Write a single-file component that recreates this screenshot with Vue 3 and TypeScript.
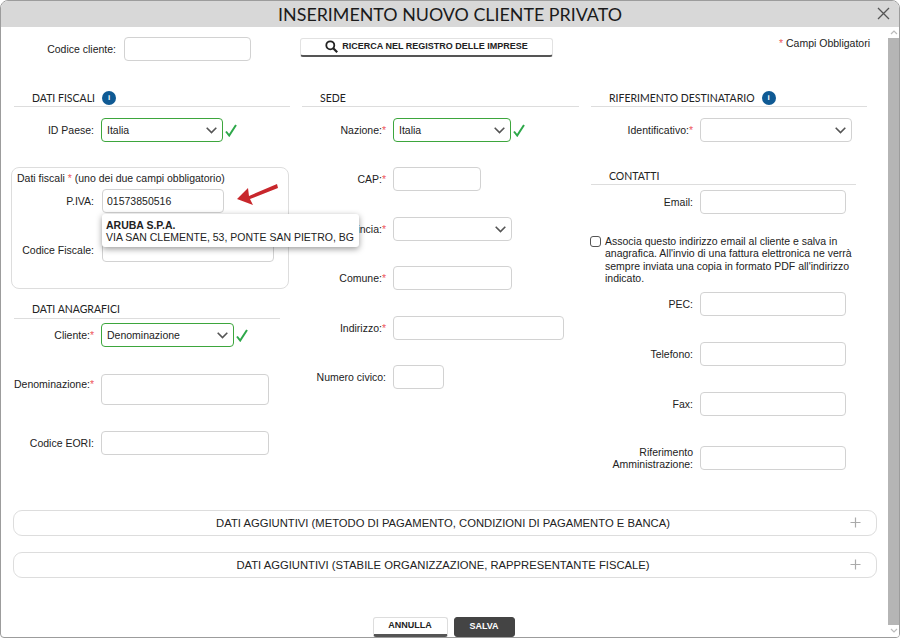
<script setup lang="ts">
const accordions: string[] = [
  'DATI AGGIUNTIVI (METODO DI PAGAMENTO, CONDIZIONI DI PAGAMENTO E BANCA)',
  'DATI AGGIUNTIVI (STABILE ORGANIZZAZIONE, RAPPRESENTANTE FISCALE)',
]
</script>

<template>
  <div class="window">
    <header class="titlebar">
      <h1 class="title">INSERIMENTO NUOVO CLIENTE PRIVATO</h1>
      <svg class="close" width="13" height="13" viewBox="0 0 13 13" aria-label="Chiudi">
        <path d="M1 1l11 11M12 1L1 12" stroke="#555" stroke-width="1.3" fill="none" />
      </svg>
    </header>

    <div class="main">
      <div class="content">
        <div class="toprow">
          <div class="field">
            <label class="label l-top">Codice cliente:</label>
            <input class="input w127" />
          </div>
          <button class="search" type="button">
            <svg width="13" height="13" viewBox="0 0 13 13">
              <circle cx="5.3" cy="5.3" r="4" fill="none" stroke="#222" stroke-width="1.8" />
              <path d="M8.2 8.2l4 4" stroke="#222" stroke-width="2.2" />
            </svg>
            RICERCA NEL REGISTRO DELLE IMPRESE
          </button>
          <div class="note"><span class="req">*</span> Campi Obbligatori</div>
        </div>

        <div class="columns">
          <section class="col col1">
            <h2 class="heading">DATI FISCALI <span class="info">i</span></h2>
            <div class="field mt11">
              <label class="label">ID Paese:</label>
              <div class="select ok w122">Italia
                <svg class="chev" width="11" height="7" viewBox="0 0 11 7"><path d="M0.7 0.8l4.8 4.8 4.8-4.8" fill="none" stroke="#555" stroke-width="1.6" /></svg>
              </div>
              <svg class="check" width="12" height="13" viewBox="0 0 12 13"><path d="M1 7.5l3.2 4L11 1" fill="none" stroke="#2ea84a" stroke-width="2" /></svg>
            </div>

            <div class="fiscal">
              <div class="legend">Dati fiscali <span class="req">*</span> (uno dei due campi obbligatorio)</div>
              <div class="field inner mt4">
                <label class="label">P.IVA:</label>
                <input class="input w122" value="01573850516" />
              </div>
              <div class="field inner mt25">
                <label class="label">Codice Fiscale:</label>
                <input class="input w172" />
              </div>
              <svg class="arrow" width="42" height="22" viewBox="0 0 42 22">
                <path d="M0 15L11 4l1 8 28-12 1 4-28 11 3 6z" fill="#c8272c" />
              </svg>
              <div class="tooltip">
                <strong>ARUBA S.P.A.</strong>
                <span>VIA SAN CLEMENTE, 53, PONTE SAN PIETRO, BG</span>
              </div>
            </div>

            <h2 class="heading short mt13">DATI ANAGRAFICI</h2>
            <div class="field mt4">
              <label class="label">Cliente:<span class="req">*</span></label>
              <div class="select ok w133">Denominazione
                <svg class="chev" width="11" height="7" viewBox="0 0 11 7"><path d="M0.7 0.8l4.8 4.8 4.8-4.8" fill="none" stroke="#555" stroke-width="1.6" /></svg>
              </div>
              <svg class="check" width="12" height="13" viewBox="0 0 12 13"><path d="M1 7.5l3.2 4L11 1" fill="none" stroke="#2ea84a" stroke-width="2" /></svg>
            </div>
            <div class="field mt27 start">
              <label class="label offset">Denominazione:<span class="req">*</span></label>
              <input class="input w168 tall" />
            </div>
            <div class="field mt26">
              <label class="label">Codice EORI:</label>
              <input class="input w168" />
            </div>
          </section>

          <section class="col col2">
            <h2 class="heading">SEDE</h2>
            <div class="field mt11">
              <label class="label">Nazione:<span class="req">*</span></label>
              <div class="select ok w118">Italia
                <svg class="chev" width="11" height="7" viewBox="0 0 11 7"><path d="M0.7 0.8l4.8 4.8 4.8-4.8" fill="none" stroke="#555" stroke-width="1.6" /></svg>
              </div>
              <svg class="check" width="12" height="13" viewBox="0 0 12 13"><path d="M1 7.5l3.2 4L11 1" fill="none" stroke="#2ea84a" stroke-width="2" /></svg>
            </div>
            <div class="field mt25">
              <label class="label">CAP:<span class="req">*</span></label>
              <input class="input w88" />
            </div>
            <div class="field mt26">
              <label class="label">Provincia:<span class="req">*</span></label>
              <div class="select w119">
                <svg class="chev" width="11" height="7" viewBox="0 0 11 7"><path d="M0.7 0.8l4.8 4.8 4.8-4.8" fill="none" stroke="#555" stroke-width="1.6" /></svg>
              </div>
            </div>
            <div class="field mt25">
              <label class="label">Comune:<span class="req">*</span></label>
              <input class="input w119" />
            </div>
            <div class="field mt26">
              <label class="label">Indirizzo:<span class="req">*</span></label>
              <input class="input w171" />
            </div>
            <div class="field mt25">
              <label class="label">Numero civico:</label>
              <input class="input w51" />
            </div>
          </section>

          <section class="col col3">
            <h2 class="heading">RIFERIMENTO DESTINATARIO <span class="info">i</span></h2>
            <div class="field mt11">
              <label class="label">Identificativo:<span class="req">*</span></label>
              <div class="select w152">
                <svg class="chev" width="11" height="7" viewBox="0 0 11 7"><path d="M0.7 0.8l4.8 4.8 4.8-4.8" fill="none" stroke="#555" stroke-width="1.6" /></svg>
              </div>
            </div>
            <h2 class="heading contacts mt26">CONTATTI</h2>
            <div class="field mt5">
              <label class="label">Email:</label>
              <input class="input w146" />
            </div>
            <label class="consent">
              <span class="box"></span>
              <span class="consent-text">Associa questo indirizzo email al cliente e salva in anagrafica. All'invio di una fattura elettronica ne verrà sempre inviata una copia in formato PDF all'indirizzo indicato.</span>
            </label>
            <div class="field mt8">
              <label class="label">PEC:</label>
              <input class="input w146" />
            </div>
            <div class="field mt26">
              <label class="label">Telefono:</label>
              <input class="input w146" />
            </div>
            <div class="field mt26">
              <label class="label">Fax:</label>
              <input class="input w146" />
            </div>
            <div class="field mt30">
              <label class="label">Riferimento Amministrazione:</label>
              <input class="input w146" />
            </div>
          </section>
        </div>

        <div class="accordions">
          <div v-for="item in accordions" :key="item" class="accordion">
            <span class="accordion-title">{{ item }}</span>
            <svg class="plus" width="11" height="11" viewBox="0 0 11 11"><path d="M5.5 0.5v10M0.5 5.5h10" stroke="#aaa" stroke-width="1.2" /></svg>
          </div>
        </div>

        <footer class="actions">
          <button class="btn cancel" type="button">ANNULLA</button>
          <button class="btn save" type="button">SALVA</button>
        </footer>
      </div>

      <div class="scrollbar">
        <svg class="sb-arrow" width="12" height="11" viewBox="0 0 12 11"><path d="M3 7l3-3 3 3" fill="none" stroke="#bbb" stroke-width="1.2" /></svg>
        <div class="sb-thumb"></div>
        <svg class="sb-arrow" width="12" height="12" viewBox="0 0 12 12"><path d="M3 4l3 3 3-3" fill="none" stroke="#bbb" stroke-width="1.2" /></svg>
      </div>
    </div>
  </div>
</template>

<style>
html, body { margin: 0; background: #fff; }
</style>

<style scoped>
.window {
  box-sizing: border-box;
  width: 900px;
  height: 638px;
  border: 1px solid #9c9c9c;
  border-radius: 8px 8px 4px 4px;
  background: #fff;
  display: flex;
  flex-direction: column;
  overflow: hidden;
  font-family: "Liberation Sans", Arial, sans-serif;
  font-size: 10.5px;
  color: #222;
}
.titlebar {
  height: 26px;
  flex: none;
  background: #d8d8d8;
  display: flex;
  align-items: center;
  justify-content: center;
  position: relative;
}
.title {
  margin: 0;
  font: 400 17.85px/26px Lato, sans-serif;
  color: #1b1b1b;
}
.close { position: absolute; right: 9px; top: 6px; }
.main { flex: 1; display: flex; min-height: 0; }
.content { flex: 1; min-width: 0; overflow: hidden; }
.toprow {
  display: flex;
  align-items: flex-start;
  padding: 10px 18px 0 13px;
  height: 24px;
}
.l-top { width: 102px !important; }
.toprow .field { gap: 8px; }
.search {
  margin: 1px 0 0 49px;
  box-sizing: border-box;
  width: 253px;
  height: 19px;
  padding: 0 0 2px;
  border: 1px solid #e2e2e2;
  border-bottom: 2px solid #555;
  border-radius: 3px;
  background: #fff;
  font: 700 9px "Liberation Sans", Arial, sans-serif;
  color: #222;
  display: flex;
  align-items: center;
  justify-content: center;
  gap: 4px;
}
.note { margin: -1px 0 0 auto; line-height: 14px; }
.req { color: #ee5a5e; }
.columns {
  display: grid;
  grid-template-columns: 276px 277px 276px;
  column-gap: 12px;
  padding-left: 13px;
  margin-top: 29px;
}
.col { min-width: 0; }
.heading {
  box-sizing: border-box;
  margin: 0;
  height: 17px;
  padding-left: 18px;
  border-bottom: 1px solid #ddd;
  font: 400 10.5px/16px Lato, sans-serif;
  color: #222;
  display: flex;
  align-items: center;
  gap: 7px;
}
.short { width: 266px; padding-bottom: 2px; }
.contacts { width: 265px; }
.info {
  width: 14px;
  height: 14px;
  border-radius: 50%;
  background: #0f5a94;
  color: #fff;
  font: 700 8px/14px "Liberation Sans", Arial, sans-serif;
  text-align: center;
}
.field { display: flex; align-items: center; gap: 7px; }
.start { align-items: flex-start; }
.offset { margin-top: 4px; }
.label { flex: none; text-align: right; line-height: 12px; }
.col1 .label { width: 80px; }
.col2 .label { width: 84px; }
.col3 .label { width: 102px; }
.input, .select {
  box-sizing: border-box;
  height: 24px;
  border: 1px solid #d2d2d2;
  border-radius: 4px;
  background: #fff;
  font: 10.5px "Liberation Sans", Arial, sans-serif;
  color: #222;
  padding: 0 4px;
  outline: none;
}
.select {
  position: relative;
  display: flex;
  align-items: center;
  padding: 0 5px;
}
.ok { border-color: #3da63d; }
.chev { position: absolute; right: 5px; top: 8px; }
.check { margin-left: -5px; }
.tall { height: 31px; }
.w51 { width: 51px; } .w88 { width: 88px; } .w118 { width: 118px; } .w119 { width: 119px; }
.w122 { width: 122px; } .w127 { width: 127px; } .w133 { width: 133px; } .w146 { width: 146px; }
.w152 { width: 152px; } .w168 { width: 168px; } .w171 { width: 171px; } .w172 { width: 172px; }
.mt4 { margin-top: 4px; } .mt5 { margin-top: 5px; } .mt8 { margin-top: 8px; } .mt11 { margin-top: 11px; }
.mt13 { margin-top: 13px; } .mt25 { margin-top: 25px; } .mt26 { margin-top: 26px; } .mt27 { margin-top: 27px; }
.mt30 { margin-top: 30px; }
.fiscal {
  position: relative;
  z-index: 2;
  box-sizing: border-box;
  width: 278px;
  height: 122px;
  margin: 25px 0 0 -3px;
  padding: 3px 0 0 2px;
  border: 1px solid #ddd;
  border-radius: 8px;
}
.legend { margin-left: 3px; line-height: 14px; }
.inner { gap: 8px; }
.arrow { position: absolute; left: 225px; top: 16px; }
.tooltip {
  position: absolute;
  left: 90px;
  top: 46px;
  box-sizing: border-box;
  width: 257px;
  height: 33px;
  padding: 5px 4px 0;
  background: #fff;
  border-radius: 3px;
  box-shadow: 0 2px 6px rgba(0, 0, 0, 0.4);
  display: flex;
  flex-direction: column;
  line-height: 12px;
  white-space: nowrap;
}
.consent {
  margin: 21px 0 0 -1px;
  display: flex;
  gap: 4px;
  align-items: flex-start;
}
.box {
  flex: none;
  box-sizing: border-box;
  width: 11px;
  height: 11px;
  margin-top: 1px;
  border: 1.5px solid #555;
  border-radius: 3px;
}
.consent-text { width: 262px; line-height: 12.25px; }
.accordions { margin: 40px 0 0 12px; width: 864px; display: flex; flex-direction: column; gap: 16px; }
.accordion {
  box-sizing: border-box;
  position: relative;
  height: 26px;
  border: 1px solid #ddd;
  border-radius: 9px;
  display: flex;
  align-items: center;
  justify-content: center;
  padding-right: 4px;
}
.accordion-title { font-size: 11.25px; }
.plus { position: absolute; right: 15px; top: 6px; }
.actions { display: flex; justify-content: center; align-items: flex-start; gap: 6px; margin-top: 39px; padding-right: 2px; }
.btn {
  box-sizing: border-box;
  padding: 0 0 2px;
  border-radius: 3px;
  font: 700 9px "Liberation Sans", Arial, sans-serif;
}
.cancel { width: 75px; height: 20px; background: #fff; border: 1px solid #ddd; border-bottom: 3px solid #555; color: #222; }
.save { width: 61px; height: 20px; background: #444; border: 1px solid #444; color: #fff; }
.scrollbar { width: 11px; flex: none; display: flex; flex-direction: column; background: #fff; }
.sb-arrow { flex: none; }
.sb-thumb { flex: 1; background: #b5b5b5; }
</style>
